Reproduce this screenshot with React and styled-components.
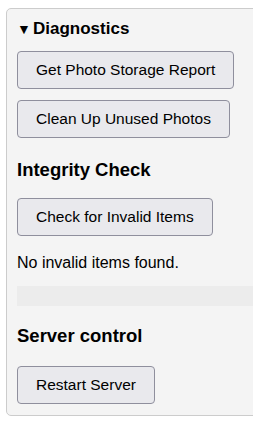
import React from "react";
import styled, { createGlobalStyle } from "styled-components";

const Global = createGlobalStyle`
  html, body { margin: 0; padding: 0; background: #ffffff; overflow: hidden; }
  body { font-family: "Liberation Sans", Arial, sans-serif; color: #000; }
`;

const Page = styled.div`
  padding: 8px 0 0 6px;
  width: 300px;
`;

const Panel = styled.section`
  width: 280px;
  background: #f4f4f4;
  border: 1px solid #cccccc;
  border-radius: 5px;
  padding: 10px 10px 11px 10px;
  display: flex;
  flex-direction: column;
  align-items: flex-start;
`;

const Summary = styled.div`
  font-size: 17px;
  font-weight: bold;
  line-height: 20px;
  display: flex;
  align-items: center;
  gap: 5px;
  margin-bottom: 12px;
`;

const Caret = styled.span`
  font-size: 14px;
  width: 11px;
  display: inline-block;
`;

const Button = styled.button`
  font-family: "Liberation Sans", Arial, sans-serif;
  font-size: 15.5px;
  line-height: 18px;
  color: #000;
  background: #e9e9ed;
  border: 1px solid #8f8f9d;
  border-radius: 4px;
  padding: 9px 18px;
  margin-bottom: ${(p) => p.$mb || 0}px;
  cursor: pointer;
`;

const Heading = styled.h3`
  margin: ${(p) => p.$mt}px 0 ${(p) => p.$mb}px 0;
  font-size: 18.5px;
  line-height: 21px;
  font-weight: bold;
`;

const Note = styled.p`
  margin: 18px 0 14px 0;
  font-size: 16px;
  line-height: 18px;
`;

const Band = styled.div`
  align-self: stretch;
  height: 20px;
  background: #ececec;
  margin-right: -10px;
`;

export default function App() {
  return (
    <Page>
      <Global />
      <Panel>
        <Summary>
          <Caret>▼</Caret>
          <span>Diagnostics</span>
        </Summary>
        <Button $mb={11}>Get Photo Storage Report</Button>
        <Button>Clean Up Unused Photos</Button>
        <Heading $mt={21} $mb={18}>Integrity Check</Heading>
        <Button>Check for Invalid Items</Button>
        <Note>No invalid items found.</Note>
        <Band />
        <Heading $mt={19} $mb={20}>Server control</Heading>
        <Button>Restart Server</Button>
      </Panel>
    </Page>
  );
}
